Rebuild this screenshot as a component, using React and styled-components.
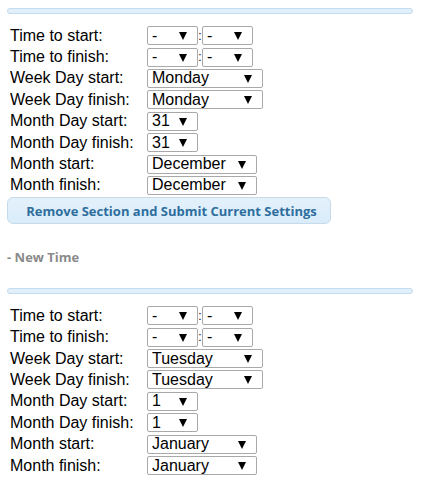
import React from "react";
import styled, { createGlobalStyle } from "styled-components";

const GlobalStyle = createGlobalStyle`
  body {
    margin: 0;
    background: #fff;
    font-family: "Liberation Sans", Arial, sans-serif;
  }
`;

const sections = [
  {
    weekDay: "Monday",
    monthDay: "31",
    month: "December",
  },
  {
    weekDay: "Tuesday",
    monthDay: "1",
    month: "January",
  },
];

const App = () => {
  return (
    <>
      <GlobalStyle />
      <Page>
        <TimeSection data={sections[0]} />
        <Submit type="button">Remove Section and Submit Current Settings</Submit>
        <NewTime>- New Time</NewTime>
        <TimeSection data={sections[1]} />
      </Page>
    </>
  );
};

const TimeSection = ({ data }) => {
  return (
    <Section>
      <Bar />
      <Form>
        <Label>Time to start:</Label>
        <Controls>
          <Select value="-" width={51} />
          <Colon>:</Colon>
          <Select value="-" width={51} />
        </Controls>
        <Label>Time to finish:</Label>
        <Controls>
          <Select value="-" width={51} />
          <Colon>:</Colon>
          <Select value="-" width={51} />
        </Controls>
        <Label>Week Day start:</Label>
        <Controls>
          <Select value={data.weekDay} width={116} />
        </Controls>
        <Label>Week Day finish:</Label>
        <Controls>
          <Select value={data.weekDay} width={116} />
        </Controls>
        <Label>Month Day start:</Label>
        <Controls>
          <Select value={data.monthDay} width={51} />
        </Controls>
        <Label>Month Day finish:</Label>
        <Controls>
          <Select value={data.monthDay} width={51} />
        </Controls>
        <Label>Month start:</Label>
        <Controls>
          <Select value={data.month} width={110} />
        </Controls>
        <Label>Month finish:</Label>
        <Controls>
          <Select value={data.month} width={110} />
        </Controls>
      </Form>
    </Section>
  );
};

const Select = ({ value, width }) => {
  return (
    <SelectBox $width={width}>
      <span>{value}</span>
      <Arrow />
    </SelectBox>
  );
};

const Page = styled.div`
  display: flex;
  flex-direction: column;
  padding: 8px 10px 0 7px;
`;

const Section = styled.div`
  display: flex;
  flex-direction: column;
`;

const Bar = styled.div`
  height: 4px;
  border: 1px solid #c5dbec;
  border-radius: 4px;
  background: #dfeffc;
`;

const Form = styled.div`
  display: grid;
  grid-template-columns: 137px auto;
  grid-auto-rows: 21.4px;
  align-items: center;
  margin-top: 11px;
  padding-left: 3px;
`;

const Label = styled.div`
  font-size: 16px;
  color: #000;
  white-space: nowrap;
`;

const Controls = styled.div`
  display: flex;
  align-items: center;
`;

const SelectBox = styled.div`
  display: flex;
  align-items: center;
  justify-content: space-between;
  box-sizing: border-box;
  width: ${(p) => p.$width}px;
  height: 19px;
  padding: 0 10px 0 4px;
  border: 1px solid #a9a9a9;
  border-radius: 2px;
  background: #fff;
  font-size: 16px;
  color: #000;
`;

const Arrow = styled.span`
  width: 0;
  height: 0;
  margin-top: 1px;
  border-left: 4.5px solid transparent;
  border-right: 4.5px solid transparent;
  border-top: 8px solid #000;
`;

const Colon = styled.span`
  width: 4px;
  text-align: center;
  font-size: 12px;
  color: #000;
`;

const Submit = styled.button`
  align-self: flex-start;
  box-sizing: border-box;
  width: 324px;
  height: 27px;
  margin-top: 1px;
  padding: 0 0 0 5px;
  border: 1px solid #c5dbec;
  border-radius: 6px;
  background: linear-gradient(#e4f1fb, #d9ecfa);
  color: #2e6e9e;
  font-family: "Open Sans", sans-serif;
  font-weight: 700;
  font-size: 13px;
  cursor: pointer;
`;

const NewTime = styled.div`
  margin: 24px 0 22px;
  font-family: "Open Sans", sans-serif;
  font-weight: 700;
  font-size: 13px;
  color: #8a8a8a;
`;

export default App;
